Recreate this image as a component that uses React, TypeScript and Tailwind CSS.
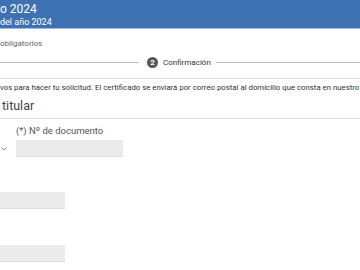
export default function App() {
  return (
    <div className="w-[360px] h-[270px] overflow-hidden bg-white font-['Roboto',sans-serif]">
      {/* Header */}
      <div className="h-[29px] bg-[#3d71b1] border-b border-[#9bbbe0] pt-[2px] whitespace-nowrap">
        <div className="text-[12px] leading-[14px] text-white">o 2024</div>
        <div className="text-[9px] leading-[11px] text-white mt-[1px]">del año 2024</div>
      </div>

      <div className="h-[22px] flex items-end text-[8px] text-[#666] pb-[1px]">obligatorios</div>

      {/* Steps */}
      <div className="h-[19px] mt-[2px] flex items-center">
        <div className="w-[139px] h-px bg-[#bdbdbd]" />
        <div className="ml-[8px] w-[11px] h-[11px] rounded-full bg-[#555] text-white text-[8px] font-bold flex items-center justify-center">2</div>
        <div className="ml-[5px] text-[8px] text-[#333] whitespace-nowrap">Confirmación</div>
        <div className="ml-[5px] flex-1 h-px bg-[#bdbdbd]" />
      </div>

      <div className="mt-[6px] h-px bg-[#e0e0e0]" />

      <div className="mt-[3px] text-[7.8px] leading-[12px] text-[#333] whitespace-nowrap">
        vos para hacer tu solicitud. El certificado se enviará por correo postal al domicilio que consta en nuestro
      </div>

      <div className="h-[25px] border-b border-[#e0e0e0] text-[12.5px] leading-[24px] text-[#444] pl-[2px]">titular</div>

      {/* Fields row */}
      <div className="flex mt-[6px]">
        <div className="w-[16px] flex flex-col">
          <div className="h-[15px]" />
          <div className="h-[17px] flex items-center">
            <svg width="6" height="4" viewBox="0 0 6 4" className="ml-[1px]">
              <path d="M0.5 0.5 L3 3 L5.5 0.5" fill="none" stroke="#777" strokeWidth="0.9" />
            </svg>
          </div>
        </div>
        <div>
          <div className="text-[9.5px] leading-[12px] text-[#555]">(*) Nº de documento</div>
          <div className="mt-[3px] w-[107px] h-[17px] bg-[#ebebeb] border-b border-[#ddd]" />
        </div>
      </div>

      <div className="mt-[35px] w-[65px] h-[17px] bg-[#ebebeb] border-b border-[#ddd]" />
      <div className="mt-[36px] w-[65px] h-[17px] bg-[#ebebeb] border-b border-[#ddd]" />
    </div>
  );
}
